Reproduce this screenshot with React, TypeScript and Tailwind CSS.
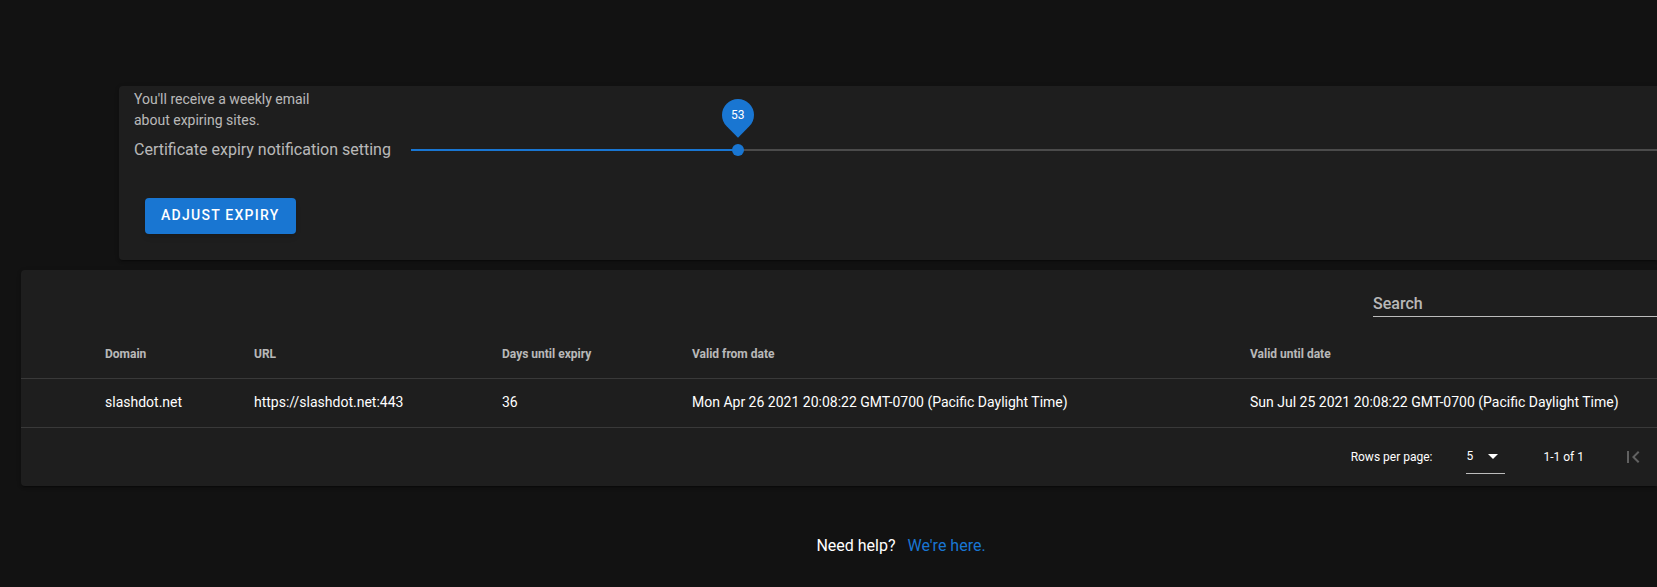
import { useState } from "react";

const MIN_DAYS = 7;
const MAX_DAYS = 182;

const cardClass =
  "rounded-l bg-[#1e1e1e] shadow-[0_3px_1px_-2px_rgba(0,0,0,0.2),0_2px_2px_0_rgba(0,0,0,0.14),0_1px_5px_0_rgba(0,0,0,0.12)]";

const columns = [
  { label: "Domain", width: "w-[149px]" },
  { label: "URL", width: "w-[248px]" },
  { label: "Days until expiry", width: "w-[190px]" },
  { label: "Valid from date", width: "w-[558px]" },
  { label: "Valid until date", width: "w-auto" },
];

const sites = [
  {
    domain: "slashdot.net",
    url: "https://slashdot.net:443",
    days: 36,
    from: "Mon Apr 26 2021 20:08:22 GMT-0700 (Pacific Daylight Time)",
    until: "Sun Jul 25 2021 20:08:22 GMT-0700 (Pacific Daylight Time)",
  },
];

const ExpirySlider = ({ value, onChange }: { value: number; onChange: (v: number) => void }) => {
  const position = `${((value - MIN_DAYS) / (MAX_DAYS - MIN_DAYS)) * 100}%`;

  return (
    <div className="relative flex h-8 flex-1 items-center">
      <div className="h-0.5 w-full bg-[#4b4b4b]">
        <div className="h-full bg-[#1976d2]" style={{ width: position }} />
      </div>
      {/* Thumb and value bubble */}
      <div className="absolute top-1/2 size-3 -translate-x-1/2 -translate-y-1/2 rounded-full bg-[#1976d2]" style={{ left: position }}>
        <div className="absolute bottom-[25px] left-1/2 flex size-8 -translate-x-1/2 rotate-45 items-center justify-center rounded-full rounded-br-none bg-[#1976d2]">
          <span className="-rotate-45 text-xs text-white">{value}</span>
        </div>
      </div>
      <input
        id="expiry"
        type="range"
        min={MIN_DAYS}
        max={MAX_DAYS}
        value={value}
        onChange={(e) => onChange(Number(e.target.value))}
        className="absolute inset-0 w-full cursor-pointer opacity-0"
      />
    </div>
  );
};

const SitesTable = () => (
  <table className="w-full table-fixed border-collapse text-left whitespace-nowrap">
    <thead>
      <tr className="h-[47px] border-b border-white/12 text-xs text-white/70">
        <td className="w-[68px]" />
        {columns.map((col) => (
          <th key={col.label} scope="col" className={`px-4 font-bold ${col.width}`}>
            {col.label}
          </th>
        ))}
      </tr>
    </thead>
    <tbody>
      {sites.map((site) => (
        <tr key={site.domain} className="h-[49px] border-b border-white/12 text-sm">
          <td />
          <td className="px-4 pb-0.5">{site.domain}</td>
          <td className="px-4 pb-0.5">{site.url}</td>
          <td className="px-4 pb-0.5">{site.days}</td>
          <td className="px-4 pb-0.5">{site.from}</td>
          <td className="px-4 pb-0.5">{site.until}</td>
        </tr>
      ))}
    </tbody>
  </table>
);

const TableFooter = () => (
  <div className="flex h-[58px] items-center justify-end pr-1.5 text-xs">
    <label htmlFor="rows">Rows per page:</label>
    <div className="relative mr-[38px] ml-[34px] border-b border-white/70">
      <select id="rows" defaultValue="5" className="h-[34px] w-[39px] appearance-none bg-transparent outline-none">
        <option value="5">5</option>
        <option value="10">10</option>
        <option value="15">15</option>
      </select>
      <svg viewBox="0 0 24 24" className="pointer-events-none absolute top-[5px] right-0 size-6 fill-white">
        <path d="M7,10L12,15L17,10H7Z" />
      </svg>
    </div>
    <span>1-1 of 1</span>
    <button type="button" disabled aria-label="First page" className="ml-[31px] flex size-9 items-center justify-center text-white/30">
      <svg viewBox="0 0 24 24" className="size-6 fill-current">
        <path d="M18.41,16.59L13.82,12L18.41,7.41L17,6L11,12L17,18L18.41,16.59M6,6H8V18H6V6Z" />
      </svg>
    </button>
  </div>
);

const App = () => {
  const [days, setDays] = useState(53);
  const [search, setSearch] = useState("");

  return (
    <div className="min-h-screen overflow-hidden bg-[#121212] pt-[86px] font-[Roboto,sans-serif] text-white">
      {/* Notification settings */}
      <section className={`ml-[119px] pb-[26px] pl-[15px] ${cardClass}`}>
        <p className="w-48 pt-[3px] text-sm leading-[21px] text-white/70">
          You'll receive a weekly email about expiring sites.
        </p>
        <div className="mt-[3px] flex items-center">
          <label htmlFor="expiry" className="mr-5 text-base text-white/70">
            Certificate expiry notification setting
          </label>
          <ExpirySlider value={days} onChange={setDays} />
        </div>
        <button
          type="button"
          className="mt-8 ml-[11px] flex h-9 items-center rounded bg-[#1976d2] px-4 pb-0.5 text-sm font-medium tracking-[0.09em] uppercase shadow-md"
        >
          Adjust expiry
        </button>
      </section>

      {/* Monitored sites */}
      <section className={`mt-2.5 ml-[21px] ${cardClass}`}>
        <div className="flex h-[61px] items-start justify-end pt-[18px]">
          <input
            type="text"
            aria-label="Search"
            placeholder="Search"
            value={search}
            onChange={(e) => setSearch(e.target.value)}
            className="h-[29px] w-[284px] border-b border-white/70 bg-transparent pt-0.5 font-medium outline-none placeholder:text-white/70"
          />
        </div>
        <SitesTable />
        <TableFooter />
      </section>

      <footer className="flex justify-center gap-3 pt-12 pb-4 pl-[145px]">
        <span>Need help?</span>
        <a href="#help" className="text-[#1976d2]">
          We're here.
        </a>
      </footer>
    </div>
  );
};

export default App;
